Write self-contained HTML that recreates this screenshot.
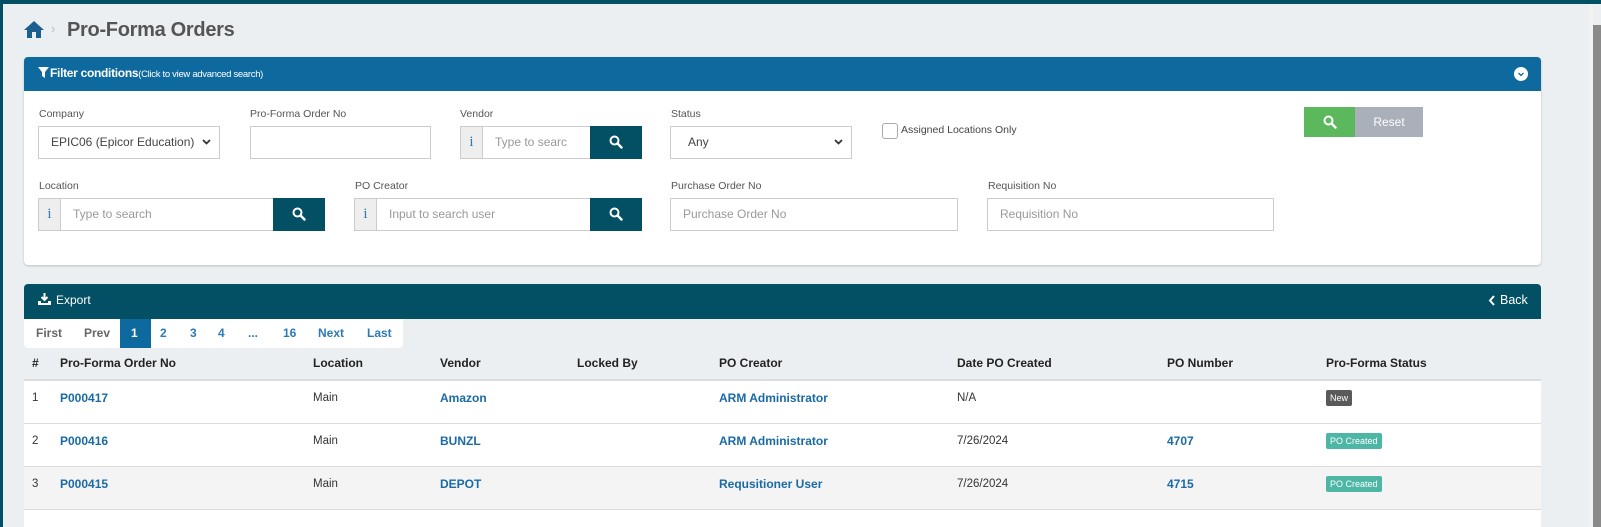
<!DOCTYPE html>
<html><head><style>
*{box-sizing:border-box;margin:0;padding:0}
body{width:1601px;height:527px;overflow:hidden;background:#eceff1;font-family:"Liberation Sans",sans-serif;position:relative;color:#333}
.a{position:absolute}
.lbl{position:absolute;font-size:10.5px;color:#555}
.inp{position:absolute;height:33px;border:1px solid #ccc;background:#fff;font-size:12px;color:#999;padding:0 12px;line-height:31px;white-space:nowrap;overflow:hidden}
.sel{color:#444}
.sel svg{position:absolute;right:8px;top:12px}
.addon{position:absolute;height:33px;width:23px;border:1px solid #ccc;background:#eee;color:#2d7ab5;font-size:15px;text-align:center;line-height:31px;font-family:"Liberation Serif",serif}
.btn{position:absolute;height:33px;width:52px;background:#034f63}
.btn svg{position:absolute;left:19px;top:9px}
.hd{position:absolute;font-size:12px;font-weight:bold;color:#222;top:356px}
.c{position:absolute;font-size:11.5px;color:#333}
.lk{position:absolute;font-size:12px;font-weight:bold;color:#1a6aa5}
.pg{position:absolute;top:326px;font-size:12px;font-weight:bold;color:#2d7ab5}
.badge{position:absolute;font-size:9px;color:#fff;padding:0 4px;height:16px;line-height:16px;border-radius:2px}
</style></head><body>
<div class="a" style="left:0;top:0;width:1601px;height:4px;background:#034f63"></div>
<div class="a" style="left:0;top:0;width:3px;height:527px;background:#034f63"></div>
<div class="a" style="left:1589px;top:4px;width:4px;height:523px;background:#f2f2f2"></div>
<div class="a" style="left:1593px;top:25px;width:8px;height:502px;background:#8a8a8a"></div>

<svg class="a" style="left:24px;top:21px" width="20" height="17" viewBox="0 0 20 17"><path d="M10 0 L20 9 L17 9 L17 17 L12 17 L12 11 L8 11 L8 17 L3 17 L3 9 L0 9 Z" fill="#1a5f8e"/></svg>
<div class="a" style="left:51px;top:21px;font-size:13px;color:#bbb">›</div>
<div class="a" style="left:67px;top:19px;font-size:20px;font-weight:bold;color:#555;letter-spacing:-0.3px">Pro-Forma Orders</div>

<div class="a" style="left:24px;top:57px;width:1517px;height:208px;background:#fff;border-radius:4px;box-shadow:0 1px 2px rgba(0,0,0,.2)"></div>
<div class="a" style="left:24px;top:57px;width:1517px;height:34px;background:#0e6a9e;border-radius:4px 4px 0 0"></div>
<svg class="a" style="left:38px;top:67px" width="11" height="11" viewBox="0 0 11 11"><path d="M0 0H11L7 5V11L4 9V5Z" fill="#fff"/></svg>
<div class="a" style="left:50px;top:66px;color:#fff;font-size:12px;font-weight:bold;letter-spacing:-0.3px">Filter conditions<span style="font-weight:normal;font-size:9.5px">(Click to view advanced search)</span></div>
<svg class="a" style="left:1514px;top:67px" width="14" height="14" viewBox="0 0 14 14"><circle cx="7" cy="7" r="7" fill="#fff"/><path d="M4.5 6L7 8.5L9.5 6" stroke="#0e6a9e" stroke-width="1.3" fill="none"/></svg>

<div class="lbl" style="left:39px;top:108px">Company</div>
<div class="inp sel" style="left:38px;top:126px;width:182px">EPIC06 (Epicor Education)<svg width="9" height="6" viewBox="0 0 9 6"><path d="M1 1L4.5 4.5L8 1" stroke="#333" stroke-width="1.8" fill="none"/></svg></div>
<div class="lbl" style="left:250px;top:108px">Pro-Forma Order No</div>
<div class="inp" style="left:250px;top:126px;width:181px"></div>
<div class="lbl" style="left:460px;top:108px">Vendor</div>
<div class="addon" style="left:460px;top:126px">i</div>
<div class="inp" style="left:482px;top:126px;width:109px">Type to searc</div>
<div class="btn" style="left:590px;top:126px"><svg width="14" height="14" viewBox="0 0 14 14"><circle cx="5.5" cy="5.5" r="4" stroke="#fff" stroke-width="2" fill="none"/><path d="M8.5 8.5L12.5 12.5" stroke="#fff" stroke-width="2.4" stroke-linecap="round"/></svg></div>
<div class="lbl" style="left:671px;top:108px">Status</div>
<div class="inp sel" style="left:670px;top:126px;width:182px;padding-left:17px">Any<svg width="9" height="6" viewBox="0 0 9 6"><path d="M1 1L4.5 4.5L8 1" stroke="#333" stroke-width="1.8" fill="none"/></svg></div>
<div class="a" style="left:882px;top:123px;width:16px;height:16px;border:1px solid #aaa;border-radius:3px;background:#fff"></div>
<div class="a" style="left:901px;top:124px;font-size:10.5px;color:#444">Assigned Locations Only</div>
<div class="a" style="left:1304px;top:107px;width:51px;height:30px;background:#5cb85c"><svg style="position:absolute;left:19px;top:8px" width="14" height="14" viewBox="0 0 14 14"><circle cx="5.5" cy="5.5" r="4" stroke="#fff" stroke-width="2" fill="none"/><path d="M8.5 8.5L12.5 12.5" stroke="#fff" stroke-width="2.4" stroke-linecap="round"/></svg></div>
<div class="a" style="left:1355px;top:107px;width:68px;height:30px;background:#a9b0ba;color:#fff;font-size:12px;text-align:center;line-height:30px">Reset</div>

<div class="lbl" style="left:39px;top:180px">Location</div>
<div class="addon" style="left:38px;top:198px">i</div>
<div class="inp" style="left:60px;top:198px;width:214px">Type to search</div>
<div class="btn" style="left:273px;top:198px"><svg width="14" height="14" viewBox="0 0 14 14"><circle cx="5.5" cy="5.5" r="4" stroke="#fff" stroke-width="2" fill="none"/><path d="M8.5 8.5L12.5 12.5" stroke="#fff" stroke-width="2.4" stroke-linecap="round"/></svg></div>
<div class="lbl" style="left:355px;top:180px">PO Creator</div>
<div class="addon" style="left:354px;top:198px">i</div>
<div class="inp" style="left:376px;top:198px;width:215px">Input to search user</div>
<div class="btn" style="left:590px;top:198px"><svg width="14" height="14" viewBox="0 0 14 14"><circle cx="5.5" cy="5.5" r="4" stroke="#fff" stroke-width="2" fill="none"/><path d="M8.5 8.5L12.5 12.5" stroke="#fff" stroke-width="2.4" stroke-linecap="round"/></svg></div>
<div class="lbl" style="left:671px;top:180px">Purchase Order No</div>
<div class="inp" style="left:670px;top:198px;width:288px">Purchase Order No</div>
<div class="lbl" style="left:988px;top:180px">Requisition No</div>
<div class="inp" style="left:987px;top:198px;width:287px">Requisition No</div>

<div class="a" style="left:24px;top:284px;width:1517px;height:35px;background:#034f63;border-radius:4px 4px 0 0"></div>
<svg class="a" style="left:38px;top:293px" width="13" height="12" viewBox="0 0 13 12"><path d="M6.5 0V7M3.5 4L6.5 7L9.5 4" stroke="#fff" stroke-width="2" fill="none"/><path d="M0 8H3V10H10V8H13V12H0Z" fill="#fff"/></svg>
<div class="a" style="left:56px;top:293px;color:#fff;font-size:12px">Export</div>
<svg class="a" style="left:1488px;top:295px" width="8" height="11" viewBox="0 0 8 11"><path d="M6 1L2 5.5L6 10" stroke="#fff" stroke-width="2" fill="none"/></svg>
<div class="a" style="left:1500px;top:293px;color:#fff;font-size:12.5px">Back</div>

<div class="a" style="left:24px;top:319px;width:379px;height:29px;background:#fff;border-radius:0 0 4px 4px"></div>
<div class="a" style="left:120px;top:319px;width:31px;height:29px;background:#0e6a9e"></div>
<div class="pg" style="left:36px;color:#666">First</div>
<div class="pg" style="left:84px;color:#666">Prev</div>
<div class="pg" style="left:131px;color:#fff">1</div>
<div class="pg" style="left:160px">2</div>
<div class="pg" style="left:190px">3</div>
<div class="pg" style="left:218px">4</div>
<div class="pg" style="left:248px">...</div>
<div class="pg" style="left:283px">16</div>
<div class="pg" style="left:318px">Next</div>
<div class="pg" style="left:367px">Last</div>

<div class="hd" style="left:32px">#</div>
<div class="hd" style="left:60px">Pro-Forma Order No</div>
<div class="hd" style="left:313px">Location</div>
<div class="hd" style="left:440px">Vendor</div>
<div class="hd" style="left:577px">Locked By</div>
<div class="hd" style="left:719px">PO Creator</div>
<div class="hd" style="left:957px">Date PO Created</div>
<div class="hd" style="left:1167px">PO Number</div>
<div class="hd" style="left:1326px">Pro-Forma Status</div>
<div class="a" style="left:24px;top:379px;width:1517px;height:2px;background:#ddd"></div>
<div class="a" style="left:24px;top:381px;width:1517px;height:43px;background:#fff;border-bottom:1px solid #ddd"></div>
<div class="a" style="left:24px;top:424px;width:1517px;height:43px;background:#fff;border-bottom:1px solid #ddd"></div>
<div class="a" style="left:24px;top:467px;width:1517px;height:43px;background:#f4f4f4;border-bottom:1px solid #ddd"></div>
<div class="a" style="left:24px;top:510px;width:1517px;height:17px;background:#fff"></div>

<div class="c" style="left:32px;top:392px">1</div>
<div class="lk" style="left:60px;top:391px">P000417</div>
<div class="c" style="left:313px;top:392px">Main</div>
<div class="lk" style="left:440px;top:391px">Amazon</div>
<div class="lk" style="left:719px;top:391px">ARM Administrator</div>
<div class="c" style="left:957px;top:392px">N/A</div>
<div class="badge" style="left:1326px;top:390px;background:#5a5a5a">New</div>

<div class="c" style="left:32px;top:435px">2</div>
<div class="lk" style="left:60px;top:434px">P000416</div>
<div class="c" style="left:313px;top:435px">Main</div>
<div class="lk" style="left:440px;top:434px">BUNZL</div>
<div class="lk" style="left:719px;top:434px">ARM Administrator</div>
<div class="c" style="left:957px;top:435px">7/26/2024</div>
<div class="lk" style="left:1167px;top:434px">4707</div>
<div class="badge" style="left:1326px;top:433px;background:#4db6a4">PO Created</div>

<div class="c" style="left:32px;top:478px">3</div>
<div class="lk" style="left:60px;top:477px">P000415</div>
<div class="c" style="left:313px;top:478px">Main</div>
<div class="lk" style="left:440px;top:477px">DEPOT</div>
<div class="lk" style="left:719px;top:477px">Requsitioner User</div>
<div class="c" style="left:957px;top:478px">7/26/2024</div>
<div class="lk" style="left:1167px;top:477px">4715</div>
<div class="badge" style="left:1326px;top:476px;background:#4db6a4">PO Created</div>
</body></html>
